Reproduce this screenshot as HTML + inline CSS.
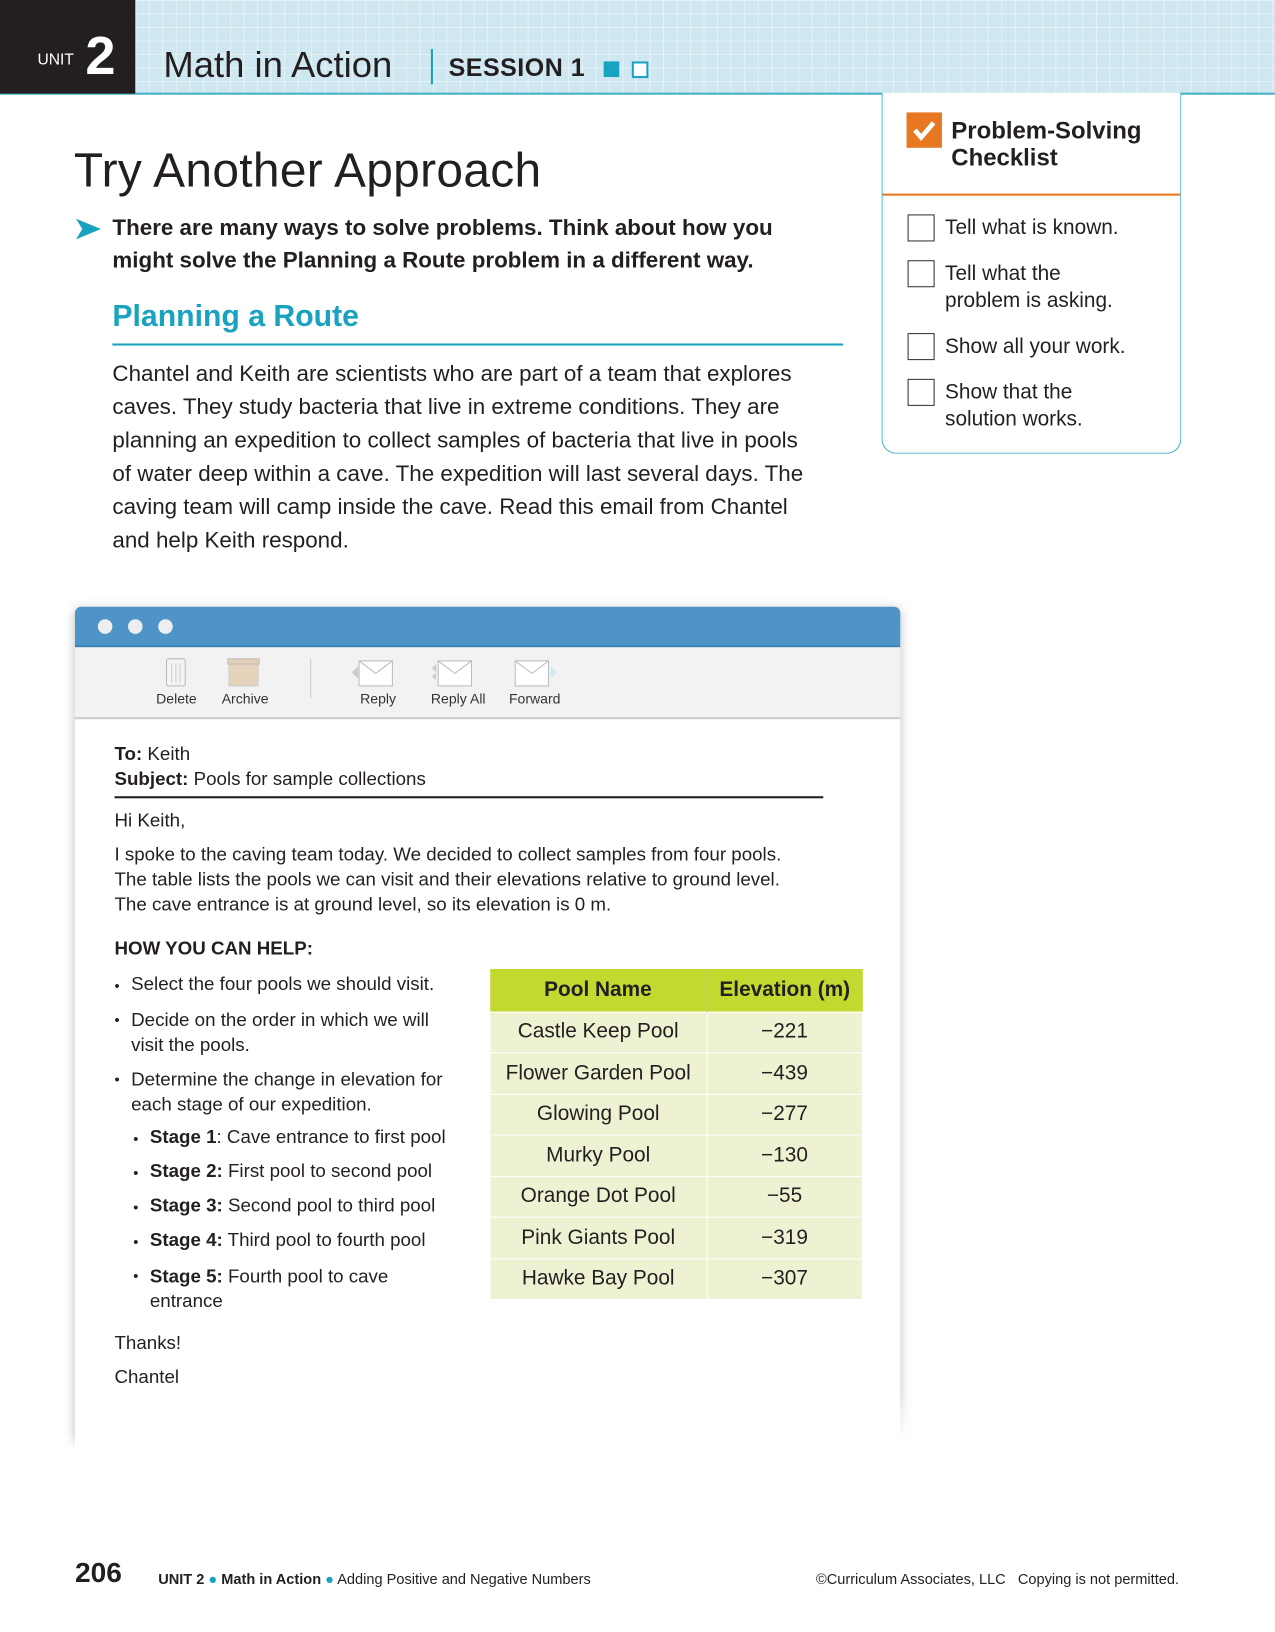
<!DOCTYPE html>
<html><head><meta charset="utf-8">
<style>
html,body{margin:0;padding:0;background:#fff;width:1275px;height:1632px;overflow:hidden}
#w{position:absolute;left:0;top:0;width:1225px;height:1568px;transform:scale(1.0408);transform-origin:0 0;font-family:"Liberation Sans",sans-serif;color:#231f20}
.a{position:absolute;white-space:nowrap}
.hdr{position:absolute;left:0;top:0;width:1225px;height:89px;background-color:#cfe7f0;background-image:linear-gradient(90deg,rgba(255,255,255,.45) 1px,transparent 1px),linear-gradient(rgba(255,255,255,.45) 1px,transparent 1px);background-size:13px 13px;border-bottom:2px solid #4ab3c6}
.cb{position:absolute;left:872px;width:24px;height:24px;border:1.5px solid #333;background:#fff}
.ci{position:absolute;left:908px;font-size:20px;line-height:26px}
.p{font-size:21.5px;line-height:32px}
.e{font-size:18px}
table{border-collapse:collapse;position:absolute;left:470px;top:931px;width:359px}
td{height:38.5px;padding:0;text-align:center;font-size:20px;border:1.5px solid #fff;background:#eef2d2}
td+td{border-left:1.5px solid #a8d07a}
th{height:38.5px;background:#c3d92f;font-size:20px;border-right:1.5px solid #a8d07a}
th:last-child{border-right:none}
.btn{position:absolute;top:664px;font-size:13.5px;color:#333}
.d{position:absolute;font-size:14px;line-height:18px}
</style></head><body><div id="w">
<div class="hdr"></div>
<div class="a" style="left:0;top:0;width:130px;height:90px;background:#231f20"></div>
<div class="a" style="left:36px;top:49px;font-size:15px;color:#fff">UNIT</div>
<div class="a" style="left:82px;top:24px;font-size:52px;font-weight:bold;color:#fff;line-height:60px">2</div>
<div class="a" style="left:157px;top:41px;font-size:35px;line-height:44px">Math in Action</div>
<div class="a" style="left:414px;top:47px;width:2px;height:34px;background:#1aa3c0"></div>
<div class="a" style="left:431px;top:52px;font-size:24px;font-weight:bold;letter-spacing:0.5px">SESSION 1</div>
<div class="a" style="left:580px;top:59px;width:15px;height:15px;background:#1aa3c0"></div>
<div class="a" style="left:607px;top:59px;width:12px;height:12px;border:2px solid #1aa3c0;background:#fff"></div>

<div class="a" style="left:847px;top:89px;width:286px;height:346px;border:1.5px solid #4ab3c6;border-top:none;border-radius:0 0 14px 14px;background:#fff"></div>
<div class="a" style="left:871px;top:108px;width:34px;height:34px;background:#e87722"></div>
<svg class="a" style="left:871px;top:108px" width="34" height="34"><path d="M8 17 L14 24 L26 10" stroke="#fff" stroke-width="4.5" fill="none"/></svg>
<div class="a" style="left:914px;top:112px;font-size:23px;font-weight:bold;line-height:26px">Problem-Solving<br>Checklist</div>
<div class="a" style="left:848px;top:186px;width:286px;height:2px;background:#e87722"></div>
<div class="cb" style="top:206px"></div><div class="ci" style="top:206px">Tell what is known.</div>
<div class="cb" style="top:250px"></div><div class="ci" style="top:250px">Tell what the<br>problem is asking.</div>
<div class="cb" style="top:320px"></div><div class="ci" style="top:320px">Show all your work.</div>
<div class="cb" style="top:364px"></div><div class="ci" style="top:364px">Show that the<br>solution works.</div>

<div class="a" style="left:71px;top:134px;font-size:46px;line-height:58px;letter-spacing:0.3px">Try Another Approach</div>
<svg class="a" style="left:73px;top:210px" width="24" height="20"><path d="M0 0 L24 10 L0 20 L6 10Z" fill="#1aa3c0"/></svg>
<div class="a" style="left:108px;top:204px;font-size:21.5px;font-weight:bold;line-height:31px">There are many ways to solve problems. Think about how you<br>might solve the Planning a Route problem in a different way.</div>
<div class="a" style="left:108px;top:288px;font-size:29px;font-weight:bold;color:#1aa3c0">Planning a Route</div>
<div class="a" style="left:108px;top:330px;width:702px;height:2px;background:#1aa3c0"></div>
<div class="a p" style="left:108px;top:343px">Chantel and Keith are scientists who are part of a team that explores<br>caves. They study bacteria that live in extreme conditions. They are<br>planning an expedition to collect samples of bacteria that live in pools<br>of water deep within a cave. The expedition will last several days. The<br>caving team will camp inside the cave. Read this email from Chantel<br>and help Keith respond.</div>

<div class="a" style="left:72px;top:583px;width:793px;height:800px;background:#fff;box-shadow:0 2px 10px rgba(0,0,0,.25);border-radius:6px 6px 0 0"></div>
<div class="a" style="left:72px;top:1340px;width:800px;height:60px;background:linear-gradient(rgba(255,255,255,0),#fff 70%)"></div>
<div class="a" style="left:72px;top:583px;width:793px;height:37px;background:#4e94c8;border-radius:6px 6px 0 0;border-bottom:2px solid #3a7fb8"></div>
<div class="a" style="left:94px;top:595px;width:14px;height:14px;border-radius:50%;background:#eee"></div>
<div class="a" style="left:123px;top:595px;width:14px;height:14px;border-radius:50%;background:#eee"></div>
<div class="a" style="left:152px;top:595px;width:14px;height:14px;border-radius:50%;background:#eee"></div>
<div class="a" style="left:72px;top:622px;width:793px;height:67px;background:#f2f2f2;border-bottom:2px solid #ccc"></div>
<svg class="a" style="left:155px;top:628px" width="400" height="34">
<rect x="5" y="5" width="18" height="26" rx="2" fill="#f4f4f4" stroke="#bbb"/><path d="M10 9V28M14 9V28M18 9V28" stroke="#ccc"/>
<rect x="65" y="9" width="28" height="22" fill="#e5d3bc" stroke="#ccc"/><rect x="64" y="5" width="30" height="5" fill="#e3d0b8" stroke="#bbb"/>
<path d="M183 18 L189 12V24Z" fill="#ccc"/><rect x="190" y="7" width="32" height="24" fill="#fff" stroke="#bbb"/><path d="M190 7L206 19L222 7" stroke="#bbb" fill="none"/>
<path d="M260 14 L264 10V18Z M260 22 L264 18V26Z" fill="#ccc"/><rect x="266" y="7" width="32" height="24" fill="#fff" stroke="#bbb"/><path d="M266 7L282 19L298 7" stroke="#bbb" fill="none"/>
<rect x="340" y="7" width="32" height="24" fill="#fff" stroke="#bbb"/><path d="M340 7L356 19L372 7" stroke="#bbb" fill="none"/><path d="M380 18 L374 12V24Z" fill="#cfeaf5"/>
</svg>
<div class="a" style="left:298px;top:633px;width:1px;height:38px;background:#ccc"></div>
<div class="btn" style="left:150px">Delete</div><div class="btn" style="left:213px">Archive</div>
<div class="btn" style="left:346px">Reply</div><div class="btn" style="left:414px">Reply All</div><div class="btn" style="left:489px">Forward</div>

<div class="a e" style="left:110px;top:712px;line-height:24px"><b>To:</b> Keith<br><b>Subject:</b> Pools for sample collections</div>
<div class="a" style="left:110px;top:765px;width:681px;height:1.5px;background:#231f20"></div>
<div class="a e" style="left:110px;top:778px">Hi Keith,</div>
<div class="a e" style="left:110px;top:809px;line-height:24px">I spoke to the caving team today. We decided to collect samples from four pools.<br>The table lists the pools we can visit and their elevations relative to ground level.<br>The cave entrance is at ground level, so its elevation is 0 m.</div>
<div class="a e" style="left:110px;top:901px;font-weight:bold">HOW YOU CAN HELP:</div>
<div class="d" style="left:110px;top:938px">•</div><div class="a e" style="left:126px;top:935px">Select the four pools we should visit.</div>
<div class="d" style="left:110px;top:971px">•</div><div class="a e" style="left:126px;top:968px;line-height:24px">Decide on the order in which we will<br>visit the pools.</div>
<div class="d" style="left:110px;top:1028px">•</div><div class="a e" style="left:126px;top:1025px;line-height:24px">Determine the change in elevation for<br>each stage of our expedition.</div>
<div class="d" style="left:128px;top:1085px">•</div><div class="a e" style="left:144px;top:1082px"><b>Stage 1</b>: Cave entrance to first pool</div>
<div class="d" style="left:128px;top:1118px">•</div><div class="a e" style="left:144px;top:1115px"><b>Stage 2:</b> First pool to second pool</div>
<div class="d" style="left:128px;top:1151px">•</div><div class="a e" style="left:144px;top:1148px"><b>Stage 3:</b> Second pool to third pool</div>
<div class="d" style="left:128px;top:1184px">•</div><div class="a e" style="left:144px;top:1181px"><b>Stage 4:</b> Third pool to fourth pool</div>
<div class="d" style="left:128px;top:1217px">•</div><div class="a e" style="left:144px;top:1214px;line-height:24px"><b>Stage 5:</b> Fourth pool to cave<br>entrance</div>
<div class="a e" style="left:110px;top:1280px">Thanks!</div>
<div class="a e" style="left:110px;top:1313px">Chantel</div>

<table>
<tr><th style="width:206px">Pool Name</th><th>Elevation (m)</th></tr>
<tr><td>Castle Keep Pool</td><td>−221</td></tr>
<tr><td>Flower Garden Pool</td><td>−439</td></tr>
<tr><td>Glowing Pool</td><td>−277</td></tr>
<tr><td>Murky Pool</td><td>−130</td></tr>
<tr><td>Orange Dot Pool</td><td>−55</td></tr>
<tr><td>Pink Giants Pool</td><td>−319</td></tr>
<tr><td>Hawke Bay Pool</td><td>−307</td></tr>
</table>

<div class="a" style="left:72px;top:1496px;font-size:27px;font-weight:bold">206</div>
<div class="a" style="left:152px;top:1509px;font-size:14px"><b>UNIT 2</b> <span style="color:#1aa3c0">●</span> <b>Math in Action</b> <span style="color:#1aa3c0">●</span> Adding Positive and Negative Numbers</div>
<div class="a" style="left:784px;top:1509px;font-size:14px">©Curriculum Associates, LLC &nbsp;&nbsp;Copying is not permitted.</div>
</div></body></html>
